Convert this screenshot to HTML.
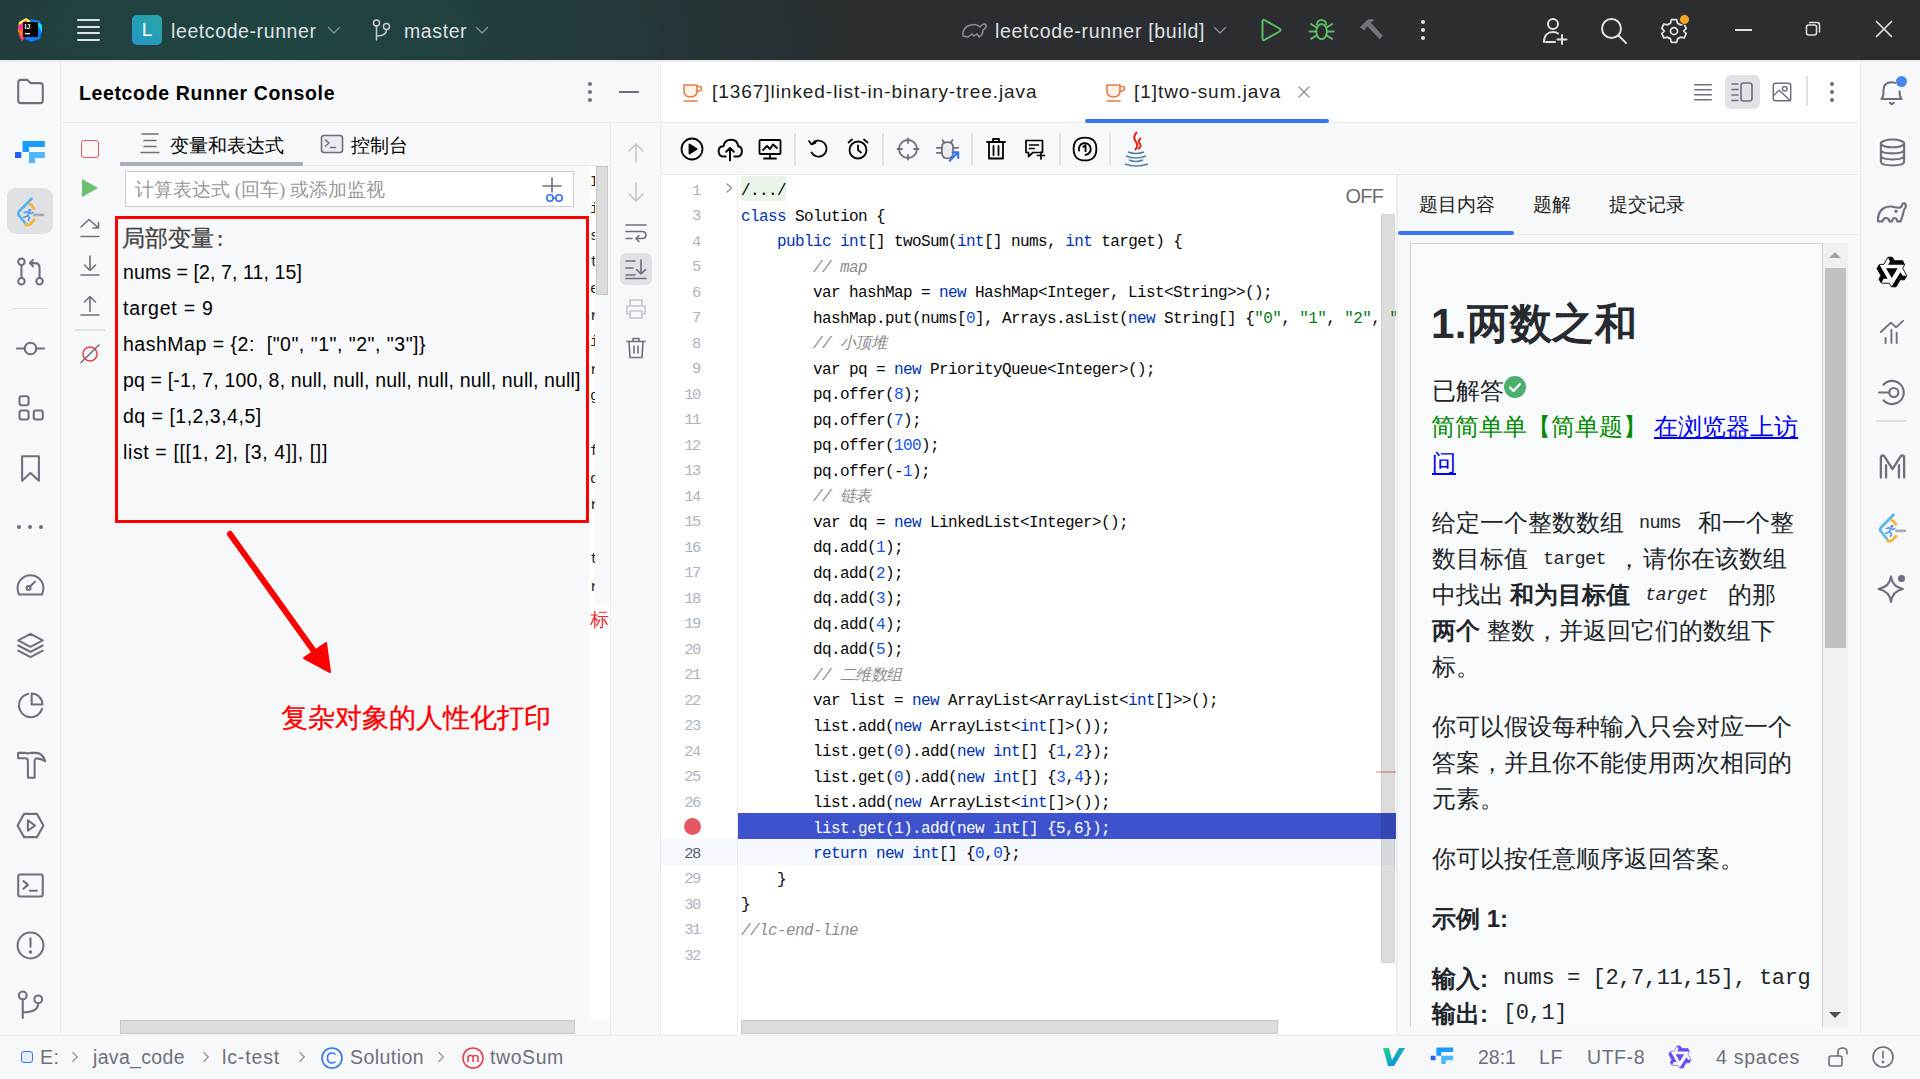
<!DOCTYPE html>
<html><head><meta charset="utf-8">
<style>
*{box-sizing:border-box;margin:0;padding:0}
html,body{width:1920px;height:1079px;overflow:hidden;background:#f7f8fa;font-family:"Liberation Sans",sans-serif;color:#000}
.a{position:absolute}
svg.i{position:absolute;fill:none;stroke:#6c707e;stroke-width:1.6;stroke-linecap:round;stroke-linejoin:round}
#title{left:0;top:0;width:1920px;height:60px;background:radial-gradient(ellipse 620px 260px at 260px 40px,#1f4542 0%,#213f3e 35%,#263436 70%,#2b2d30 100%)}
.tt{color:#dfe1e5;font-size:19.5px;white-space:nowrap;letter-spacing:0.6px}
.mono{font-family:"Liberation Mono",monospace}
.code{font-family:"Liberation Mono",monospace;font-size:16px;letter-spacing:-0.6px;padding-top:3.2px;white-space:pre;color:#080808;line-height:25.5px;height:25.5px}
.ln{font-family:"Liberation Mono",monospace;font-size:15.5px;padding-top:2.5px;margin-left:0px;letter-spacing:-1.4px;color:#aeb3c2;text-align:right;width:40px;line-height:25.5px}
.kw{color:#0033b3}
.num{color:#1750eb}
.str{color:#067d17}
.cm{color:#8c8c8c;font-style:italic}
.var{font-size:19.5px;color:#000;white-space:nowrap}
</style></head><body>
<!-- TITLE BAR -->
<div id="title" class="a"></div>
<!-- IJ logo -->
<svg class="a" style="left:17px;top:17px" width="26" height="26" viewBox="0 0 26 26">
<polygon points="2,5 9,1 14,4 8,12 1,15" fill="#fcf84a"/>
<polygon points="1,9 9,3 13,11 5,25 2,18" fill="#ff318c"/>
<polygon points="1,14 6,12 5,22" fill="#f97a12"/>
<polygon points="14,2 23,4 25,13 23,22 14,25 8,22 12,12" fill="#087cfa"/>
<polygon points="18,3 25,8 25,16" fill="#21d7f0"/>
<rect x="6" y="5" width="15" height="15" fill="#000"/>
<text x="7.5" y="11.8" font-family="Liberation Sans" font-weight="bold" font-size="7" fill="#fff">IJ</text>
<rect x="8" y="16" width="5" height="1.3" fill="#fff"/>
</svg>
<!-- hamburger -->
<div class="a" style="left:77px;top:19px;width:23px;height:2.2px;background:#dfe1e5;border-radius:1px"></div>
<div class="a" style="left:77px;top:25.5px;width:23px;height:2.2px;background:#dfe1e5;border-radius:1px"></div>
<div class="a" style="left:77px;top:32px;width:23px;height:2.2px;background:#dfe1e5;border-radius:1px"></div>
<div class="a" style="left:77px;top:38.5px;width:23px;height:2.2px;background:#dfe1e5;border-radius:1px"></div>
<!-- L badge -->
<div class="a" style="left:132px;top:15px;width:30px;height:30px;border-radius:5px;background:linear-gradient(35deg,#2794c8 0%,#27a7a4 100%)"></div>
<div class="a" style="left:132px;top:15px;width:30px;height:30px;color:#fff;font-size:19px;text-align:center;line-height:30px">L</div>
<div class="a tt" style="left:171px;top:20px">leetcode-runner</div>
<svg class="i" style="left:327px;top:25px;stroke:#8a8e99;stroke-width:1.3" width="14" height="10" viewBox="0 0 14 10"><path d="M1.5 2.5 L7 8 L12.5 2.5"/></svg>
<!-- branch -->
<svg class="i" style="left:371px;top:18px;stroke:#c9ccd6;stroke-width:1.5" width="22" height="24" viewBox="0 0 22 24"><circle cx="5.5" cy="5" r="3"/><circle cx="15.5" cy="8.5" r="3"/><path d="M5.5 8 V22 M5.5 18 Q15.5 18 15.5 11.5"/></svg>
<div class="a tt" style="left:404px;top:20px">master</div>
<svg class="i" style="left:475px;top:25px;stroke:#8a8e99;stroke-width:1.3" width="14" height="10" viewBox="0 0 14 10"><path d="M1.5 2.5 L7 8 L12.5 2.5"/></svg>
<!-- run config -->
<svg class="i" style="left:960px;top:19px;stroke:#8a8e99;stroke-width:1.5" width="28" height="22" viewBox="0 0 28 22"><path d="M3 17 C2 12 5 7 11 6 C15 5 18 6 20 8 C22 5 25 4 26 6 C27 9 24 10 23 11 C23 14 21 17 19 18 L17 15 L14 17 L12 15 L8 18 Z"/></svg>
<div class="a tt" style="left:995px;top:20px;letter-spacing:0.7px">leetcode-runner [build]</div>
<svg class="i" style="left:1213px;top:25px;stroke:#8a8e99;stroke-width:1.3" width="14" height="10" viewBox="0 0 14 10"><path d="M1.5 2.5 L7 8 L12.5 2.5"/></svg>
<!-- run -->
<svg class="a" style="left:1240px;top:0" width="160" height="60" viewBox="1240 0 160 60">
<path d="M1262.5 21.5 Q1262.5 19 1265 20.3 L1279.5 28.5 Q1281.5 30 1279.5 31.5 L1265 39.7 Q1262.5 41 1262.5 38.5 Z" fill="none" stroke="#5fb865" stroke-width="2" stroke-linejoin="round"/>
<g fill="none" stroke="#5fb865" stroke-width="2" stroke-linecap="round">
<path d="M1317 24.5 A4.6 4.6 0 0 1 1326.2 24.5"/>
<ellipse cx="1321.6" cy="31.6" rx="5.3" ry="7.6"/>
<path d="M1311 24 L1316.3 27.3 M1332.2 24 L1326.9 27.3 M1309.5 31.6 H1316.3 M1326.9 31.6 H1333.7 M1311 38.8 L1316.3 35.6 M1332.2 38.8 L1326.9 35.6"/>
</g>
<path d="M1359.8 27.2 L1366.5 20.5 Q1371 18 1374.3 20 L1370.8 22.8 L1383 35.8 L1379.8 39.3 L1367.2 26.2 L1364.3 30.6 Z" fill="#6f737a"/>
</svg>
<!-- kebab -->
<div class="a" style="left:1421px;top:20px;width:4px;height:4px;border-radius:50%;background:#dfe1e5"></div>
<div class="a" style="left:1421px;top:28px;width:4px;height:4px;border-radius:50%;background:#dfe1e5"></div>
<div class="a" style="left:1421px;top:36px;width:4px;height:4px;border-radius:50%;background:#dfe1e5"></div>
<!-- user plus -->
<svg class="i" style="left:1540px;top:16px;stroke:#dfe1e5;stroke-width:2" width="30" height="30" viewBox="0 0 30 30"><circle cx="13" cy="8" r="5"/><path d="M4 26 C4 19 8 16 13 16 C15 16 17 16.5 18 17.5 M6 26 H15 M22 19 V28 M17.5 23.5 H26.5"/></svg>
<!-- search -->
<svg class="i" style="left:1599px;top:16px;stroke:#dfe1e5;stroke-width:2" width="30" height="30" viewBox="0 0 30 30"><circle cx="12.5" cy="12.5" r="9.5"/><path d="M19.5 19.5 L27 27"/></svg>
<!-- gear -->
<svg class="i" style="left:1660px;top:17px;stroke:#dfe1e5;stroke-width:2" width="28" height="28" viewBox="0 0 32 32"><path d="M13 3 H19 L20 7 L23.5 9 L27.5 8 L30 13 L27 16 L30 19 L27.5 24 L23.5 23 L20 25 L19 29 H13 L12 25 L8.5 23 L4.5 24 L2 19 L5 16 L2 13 L4.5 8 L8.5 9 L12 7 Z"/><circle cx="16" cy="16" r="4"/></svg>
<div class="a" style="left:1679px;top:14px;width:11px;height:11px;border-radius:50%;background:#f4a52a;border:1.5px solid #2b2d30"></div>
<!-- window buttons -->
<div class="a" style="left:1735px;top:29px;width:17px;height:1.6px;background:#dfe1e5"></div>
<svg class="i" style="left:1803px;top:19px;stroke:#dfe1e5;stroke-width:1.5" width="20" height="20" viewBox="0 0 20 20"><rect x="3.5" y="6" width="10" height="10" rx="2"/><path d="M6.5 3.5 H14 Q16.5 3.5 16.5 6 V13"/></svg>
<svg class="i" style="left:1874px;top:19px;stroke:#dfe1e5;stroke-width:1.7" width="20" height="20" viewBox="0 0 20 20"><path d="M2.5 2.5 L17.5 17.5 M17.5 2.5 L2.5 17.5"/></svg>


<!-- frame borders -->
<div class="a" style="left:0;top:60px;width:1920px;height:2px;background:#ebecf0"></div>
<div class="a" style="left:60px;top:62px;width:1px;height:973px;background:#ebecf0"></div>
<div class="a" style="left:1860px;top:62px;width:1px;height:973px;background:#ebecf0"></div>

<!-- LEFT STRIP -->
<svg class="i" style="left:14.5px;top:75.5px;" width="31" height="31" viewBox="0 0 24 24"><path d="M2.5 5 Q2.5 3 4.5 3 H9.5 L12 5.5 H19.5 Q21.5 5.5 21.5 7.5 V19 Q21.5 21 19.5 21 H4.5 Q2.5 21 2.5 19 Z"/></svg>
<svg class="a" style="left:10px;top:131px" width="40.0" height="40.0" viewBox="0 0 40 40"><rect x="5" y="21" width="6.3" height="6" rx="0.6" fill="#1f62ff"/><path d="M12.5 10 H34.8 V16 H19 V21 H12.5 Z" fill="#1a9bff"/><path d="M19 21 H34.8 V27 H25 V32 H19 Z" fill="#4cb6ff"/></svg>
<div class="a" style="left:7px;top:188px;width:46px;height:46px;border-radius:9px;background:#dfe1e5"></div>
<svg class="a" style="left:10px;top:191px" width="40" height="40" viewBox="0 0 40 40"><path d="M21.5 7.8 L9 20.5 Q7.5 22.5 9 24.5 L15 32" fill="none" stroke="#5ab4ea" stroke-width="2.7" stroke-linecap="round" stroke-linejoin="round"/><path d="M19.8 13.5 Q20.5 13 21.2 13.7 L24 17.7" fill="none" stroke="#f5b431" stroke-width="2.7" stroke-linecap="round"/><path d="M15.5 33.5 Q18 35 20.5 33 L24 29" fill="none" stroke="#f5b431" stroke-width="2.7" stroke-linecap="round"/><path d="M24.2 23.8 H33" stroke="#ababab" stroke-width="2.8" stroke-linecap="round"/><circle cx="19.8" cy="19.2" r="1.5" fill="#4d94ef"/><path d="M14.2 21.6 L16.5 20.8 L19.2 21.8 L21.5 22.5 L22.8 21.4 M18.8 21.4 L17.5 25 L13.7 26.2 M17.6 25 L19.6 26.5 L18.5 29.5" fill="none" stroke="#4d94ef" stroke-width="1.5" stroke-linecap="round" stroke-linejoin="round"/></svg>

<svg class="i" style="left:14.5px;top:255.5px;" width="31" height="31" viewBox="0 0 24 24"><circle cx="5" cy="4.5" r="2.5"/><circle cx="5" cy="19.5" r="2.5"/><circle cx="19" cy="19.5" r="2.5"/><path d="M5 7 V17 M19 17 V9 Q19 5.5 15.5 5.5 H11.5 M14 3 L11.5 5.5 L14 8"/></svg>
<div class="a" style="left:12px;top:308px;width:36px;height:1px;background:#dfe1e5"></div>
<svg class="i" style="left:14.5px;top:332.5px;" width="31" height="31" viewBox="0 0 24 24"><circle cx="12" cy="12" r="4.5"/><path d="M1.5 12 H7.5 M16.5 12 H22.5"/></svg>
<svg class="i" style="left:14.5px;top:392.5px;" width="31" height="31" viewBox="0 0 24 24"><rect x="3.5" y="2.5" width="7" height="7" rx="1.5"/><rect x="3.5" y="13.5" width="7" height="7" rx="1.5"/><rect x="14.5" y="13.5" width="7" height="7" rx="1.5"/></svg>
<svg class="i" style="left:14.5px;top:452.5px;" width="31" height="31" viewBox="0 0 24 24"><path d="M5.5 2.5 H18.5 V21.5 L12 15.5 L5.5 21.5 Z"/></svg>
<div class="a" style="left:17px;top:525px;width:4px;height:4px;border-radius:50%;background:#6c707e"></div>
<div class="a" style="left:28px;top:525px;width:4px;height:4px;border-radius:50%;background:#6c707e"></div>
<div class="a" style="left:39px;top:525px;width:4px;height:4px;border-radius:50%;background:#6c707e"></div>
<svg class="i" style="left:14.5px;top:569.5px;" width="31" height="31" viewBox="0 0 24 24"><path d="M3 19 Q2 16 2 14 A10 10 0 0 1 22 14 Q22 16 21 19 Z"/><circle cx="10.5" cy="14" r="1.5"/><path d="M11.5 13 L15.5 9"/></svg>
<svg class="i" style="left:14.5px;top:629.5px;" width="31" height="31" viewBox="0 0 24 24"><path d="M12 3 L21.5 8 L12 13 L2.5 8 Z M2.5 12 L12 17 L21.5 12 M2.5 16 L12 21 L21.5 16"/></svg>
<svg class="i" style="left:14.5px;top:689.5px;" width="31" height="31" viewBox="0 0 24 24"><path d="M10.2 2.9 A9.2 9.2 0 1 0 21 14.6"/><path d="M12.9 2.7 V11.2 H21.2 A8.5 8.5 0 0 0 12.9 2.7 Z"/></svg>
<svg class="i" style="left:14.5px;top:749.5px;" width="31" height="31" viewBox="0 0 24 24"><path d="M2.4 2.2 H8 Q10 3 12 2.2 H16 Q21.5 2.2 23.3 8.6 Q19.5 6.2 16.3 6.5 Q15 6.8 15.2 9 V21.5 H10 V9 Q10.2 6.6 8 6.4 H2.4 Z"/></svg>
<svg class="i" style="left:14.5px;top:809.5px;" width="31" height="31" viewBox="0 0 24 24"><path d="M7 3 H17 L22 12 L17 21 H7 L2 12 Z"/><path d="M10 8 L15.5 12 L10 16 Z"/></svg>
<svg class="i" style="left:14.5px;top:869.5px;" width="31" height="31" viewBox="0 0 24 24"><rect x="2.5" y="3.5" width="19" height="17" rx="1.5"/><path d="M6.5 8.5 L10 11.5 L6.5 14.5 M11.5 16 H17"/></svg>
<svg class="i" style="left:14.5px;top:929.5px;" width="31" height="31" viewBox="0 0 24 24"><circle cx="12" cy="12" r="10"/><path d="M12 6.5 V13"/><circle cx="12" cy="17" r="0.6" fill="#6c707e"/></svg>
<svg class="i" style="left:14.5px;top:988.5px;" width="31" height="31" viewBox="0 0 24 24"><circle cx="6" cy="5" r="3"/><circle cx="18" cy="8" r="3"/><path d="M6 8 V22.5 M6 18 Q18 18 18 11"/></svg>
<!-- CONSOLE PANEL -->
<div class="a" style="left:61px;top:122px;width:599px;height:1px;background:#ebecf0"></div>
<div class="a" style="left:79px;top:81.5px;font-size:19.5px;font-weight:bold;color:#000;white-space:nowrap;letter-spacing:0.63px">Leetcode Runner Console</div>
<div class="a" style="left:588px;top:82px;width:4px;height:4px;border-radius:50%;background:#6c707e"></div>
<div class="a" style="left:588px;top:90px;width:4px;height:4px;border-radius:50%;background:#6c707e"></div>
<div class="a" style="left:588px;top:98px;width:4px;height:4px;border-radius:50%;background:#6c707e"></div>
<div class="a" style="left:619px;top:90.5px;width:20px;height:2px;background:#6c707e"></div>
<!-- mini toolbar -->
<div class="a" style="left:81px;top:140px;width:18px;height:18px;border:1.6px solid #e05a66;border-radius:3px;background:#fff6f6"></div>
<svg class="a" style="left:80px;top:178px" width="20" height="20" viewBox="0 0 20 20"><path d="M2 1 L18 10 L2 19 Z" fill="#6cbf6c"/></svg>
<svg class="i" style="left:78px;top:216px" width="24" height="24" viewBox="0 0 24 24"><path d="M3 11 L11 3.5 L20.5 12 M20.5 6.5 V12 H15 M3 20.5 H21"/></svg>
<svg class="i" style="left:78px;top:254px" width="24" height="24" viewBox="0 0 24 24"><path d="M12 2 V16.5 M6.5 11 L12 16.5 L17.5 11 M3 21 H21"/></svg>
<svg class="i" style="left:78px;top:293px" width="24" height="24" viewBox="0 0 24 24"><path d="M12 18.5 V3.5 M6.5 9 L12 3.5 L17.5 9 M3 22 H21"/></svg>
<div class="a" style="left:75px;top:329px;width:30px;height:1.5px;background:#dfe1e5"></div>
<svg class="i" style="left:78px;top:342px" width="24" height="24" viewBox="0 0 24 24"><circle cx="12" cy="12" r="7" stroke="#e5424f"/><path d="M3 20.5 L21 3" stroke="#6c707e"/></svg>
<!-- tabs -->
<svg class="i" style="left:139px;top:131px" width="22" height="24" viewBox="0 0 22 24"><path d="M3 3 H19 M5 9.5 H17 M5 15.5 H17 M2 21.5 H20"/></svg>
<div class="a" style="left:170px;top:133px;font-size:19px;color:#000;white-space:nowrap">变量和表达式</div>
<div class="a" style="left:120px;top:162px;width:183px;height:4px;background:#a8adbd;border-radius:1px"></div>
<div class="a" style="left:303px;top:165px;width:307px;height:1px;background:#ebecf0"></div>
<svg class="i" style="left:320px;top:134px" width="24" height="20" viewBox="0 0 24 20"><rect x="1.5" y="1.5" width="21" height="17" rx="2.5" fill="#ebecf0"/><path d="M5.5 6 L9 9 L5.5 12 M10.5 13.5 H15.5"/></svg>
<div class="a" style="left:351px;top:133px;font-size:19px;color:#000;white-space:nowrap">控制台</div>
<!-- input -->
<div class="a" style="left:125px;top:171px;width:449px;height:36px;border:1.5px solid #c9ccd6;background:#fff"></div>
<div class="a" style="left:135px;top:177px;font-size:19px;color:#9a9a9a;white-space:nowrap;font-family:'Liberation Serif',serif">计算表达式 (回车) 或添加监视</div>
<svg class="i" style="left:540px;top:176px;stroke-width:1.6" width="26" height="28" viewBox="0 0 26 28"><path d="M12 2 V16 M3 10 H21" stroke="#6c707e"/><circle cx="10" cy="22" r="3.2" stroke="#3d74e8"/><circle cx="19" cy="22" r="3.2" stroke="#3d74e8"/><path d="M13 22 H16" stroke="#3d74e8"/></svg>
<!-- console strip + scrollbar -->
<div class="a" style="left:589px;top:166px;width:6px;height:854px;background:#fff;overflow:hidden"><div class="a mono" style="left:1px;top:7px;font-size:15px;color:#222;line-height:20px">I</div><div class="a mono" style="left:1px;top:34px;font-size:15px;color:#222;line-height:20px">i</div><div class="a mono" style="left:1px;top:61px;font-size:15px;color:#222;line-height:20px">s</div><div class="a mono" style="left:1px;top:87px;font-size:15px;color:#222;line-height:20px">t</div><div class="a mono" style="left:1px;top:114px;font-size:15px;color:#222;line-height:20px">e</div><div class="a mono" style="left:1px;top:141px;font-size:15px;color:#222;line-height:20px">r</div><div class="a mono" style="left:1px;top:167px;font-size:15px;color:#222;line-height:20px">i</div><div class="a mono" style="left:1px;top:195px;font-size:15px;color:#222;line-height:20px">r</div><div class="a mono" style="left:1px;top:221px;font-size:15px;color:#222;line-height:20px">g</div><div class="a mono" style="left:1px;top:276px;font-size:15px;color:#222;line-height:20px">f</div><div class="a mono" style="left:1px;top:304px;font-size:15px;color:#222;line-height:20px">c</div><div class="a mono" style="left:1px;top:330px;font-size:15px;color:#222;line-height:20px">r</div><div class="a mono" style="left:1px;top:384px;font-size:15px;color:#222;line-height:20px">t</div><div class="a mono" style="left:1px;top:412px;font-size:15px;color:#222;line-height:20px">r</div></div>
<div class="a" style="left:589px;top:605px;width:21px;height:415px;background:#fff"></div>
<div class="a" style="left:590px;top:607px;font-size:19px;color:#f03030;line-height:26px">标</div>

<div class="a" style="left:596px;top:166px;width:12px;height:129px;background:#dcdcdc;border:1px solid #c8c8c8"></div>
<div class="a" style="left:610px;top:123px;width:1px;height:912px;background:#ebecf0"></div>
<!-- right toolbar -->
<svg class="i" style="left:624px;top:141px;stroke:#c3c6cf" width="24" height="24" viewBox="0 0 24 24"><path d="M12 21 V3 M5 10 L12 3 L19 10"/></svg>
<svg class="i" style="left:624px;top:180px;stroke:#c3c6cf" width="24" height="24" viewBox="0 0 24 24"><path d="M12 3 V21 M5 14 L12 21 L19 14"/></svg>
<svg class="i" style="left:624px;top:220px" width="24" height="24" viewBox="0 0 24 24"><path d="M2 5 H22 M2 11.5 H18 Q22 11.5 22 15 Q22 18.5 18 18.5 H12 M15 15.5 L12 18.5 L15 21.5 M2 18.5 H8"/></svg>
<div class="a" style="left:620px;top:253px;width:32px;height:32px;border-radius:6px;background:#dfe1e5"></div>
<svg class="i" style="left:624px;top:257px" width="24" height="24" viewBox="0 0 24 24"><path d="M2 4 H11 M2 11 H9 M2 18 H11 M2 21.5 H22 M17 3 V17 M12.5 12.5 L17 17 L21.5 12.5"/></svg>
<svg class="i" style="left:624px;top:297px;stroke:#c3c6cf" width="24" height="24" viewBox="0 0 24 24"><path d="M6 9 V3 H18 V9 M6 17 H3 V9 H21 V17 H18 M6 14 H18 V21 H6 Z"/></svg>
<svg class="i" style="left:624px;top:336px" width="24" height="24" viewBox="0 0 24 24"><path d="M3 5.5 H21 M9 5.5 V2.5 H15 V5.5 M5 5.5 L6 21.5 H18 L19 5.5 M10 10 V17 M14 10 V17"/></svg>
<!-- red box -->
<div class="a" style="left:115px;top:216px;width:474px;height:307px;border:3px solid #ff0000"></div>
<div class="a var" style="left:122px;top:223px;font-size:22.5px;color:#444;font-family:'Liberation Serif',serif;-webkit-text-stroke:0.3px #444">局部变量<span style="margin-left:3px">:</span></div>
<div class="a var" style="left:123px;top:261px;letter-spacing:0.1px">nums = [2, 7, 11, 15]</div>
<div class="a var" style="left:123px;top:297px;letter-spacing:0.78px">target = 9</div>
<div class="a var" style="left:123px;top:333px;letter-spacing:0.51px">hashMap = {2:&nbsp; ["0", "1", "2", "3"]}</div>
<div class="a var" style="left:123px;top:369px;letter-spacing:0.17px">pq = [-1, 7, 100, 8, null, null, null, null, null, null, null]</div>
<div class="a var" style="left:123px;top:405px;letter-spacing:0.5px">dq = [1,2,3,4,5]</div>
<div class="a var" style="left:123px;top:441px;letter-spacing:0.62px">list = [[[1, 2], [3, 4]], []]</div>
<!-- arrow -->
<svg class="a" style="left:0;top:0" width="660" height="760"><path d="M230 534 L316 654" stroke="#ff0000" stroke-width="6" stroke-linecap="round"/><path d="M304 658 L330 672 L326 643 Z" fill="#ff0000" stroke="#ff0000" stroke-width="2" stroke-linejoin="round"/></svg>
<div class="a" style="left:281px;top:700px;font-size:27px;color:#ff0000;white-space:nowrap;-webkit-text-stroke:0.3px #ff0000">复杂对象的人性化打印</div>
<!-- h scrollbar -->
<div class="a" style="left:120px;top:1020px;width:455px;height:14px;background:#dcdcdc;border:1px solid #c8c8c8"></div>


<!-- EDITOR -->
<div class="a" style="left:660px;top:62px;width:1px;height:973px;background:#ebecf0"></div>
<div class="a" style="left:661px;top:62px;width:1199px;height:61px;background:#fff"></div>
<div class="a" style="left:661px;top:122px;width:1199px;height:1px;background:#ebecf0"></div>
<div class="a" style="left:661px;top:174px;width:1199px;height:1px;background:#ebecf0"></div>
<div class="a" style="left:661px;top:175px;width:735px;height:860px;background:#fff"></div>
<div class="a" style="left:737px;top:175px;width:1px;height:860px;background:#ebecf0"></div>

<svg class="i" style="left:681.0px;top:80.0px;stroke-width:1.6" width="24" height="24" viewBox="0 0 24 24"><path d="M3 5 H16 V11 Q16 17 9.5 17 Q3 17 3 11 Z" fill="#fdf1e8" stroke="#e07e45"/><path d="M16 6.5 H18.5 Q20.5 6.5 20.5 8.5 Q20.5 11 16 11.5" stroke="#e07e45"/><path d="M3 21 H16" stroke="#e07e45"/></svg>
<div class="a tt" style="left:712px;top:81px;color:#222;font-size:19px;letter-spacing:0.95px">[1367]linked-list-in-binary-tree.java</div>
<svg class="i" style="left:1104.0px;top:80.0px;stroke-width:1.6" width="24" height="24" viewBox="0 0 24 24"><path d="M3 5 H16 V11 Q16 17 9.5 17 Q3 17 3 11 Z" fill="#fdf1e8" stroke="#e07e45"/><path d="M16 6.5 H18.5 Q20.5 6.5 20.5 8.5 Q20.5 11 16 11.5" stroke="#e07e45"/><path d="M3 21 H16" stroke="#e07e45"/></svg>
<div class="a tt" style="left:1134px;top:81px;color:#222;font-size:19px;letter-spacing:0.95px">[1]two-sum.java</div>
<svg class="i" style="left:1294.0px;top:82.0px;stroke:#8a8e99;stroke-width:1.5" width="20" height="20" viewBox="0 0 24 24"><path d="M6 6 L18 18 M18 6 L6 18"/></svg>
<div class="a" style="left:1085px;top:119px;width:244px;height:4px;border-radius:2px;background:#3574f0"></div>
<svg class="i" style="left:1692.0px;top:81.0px;" width="22" height="22" viewBox="0 0 24 24"><path d="M3 4 H21 M3 9.5 H21 M3 15 H21 M3 20.5 H21"/></svg>
<div class="a" style="left:1725px;top:75px;width:35px;height:34px;border-radius:6px;background:#dfe1e5"></div>
<svg class="i" style="left:1730.0px;top:80.0px;" width="24" height="24" viewBox="0 0 24 24"><path d="M2 4 H8 M2 9.5 H8 M2 15 H8 M2 20.5 H8"/><rect x="11" y="3" width="11" height="18" rx="2.5"/></svg>
<svg class="i" style="left:1771.0px;top:81.0px;" width="22" height="22" viewBox="0 0 24 24"><rect x="2.5" y="2.5" width="19" height="19" rx="2.5"/><circle cx="15" cy="8.5" r="2.5"/><path d="M2.5 16 L9 10 L21 21.5"/></svg>
<div class="a" style="left:1806px;top:76px;width:1.5px;height:30px;background:#dfe1e5"></div>
<div class="a" style="left:1830px;top:82px;width:4px;height:4px;border-radius:50%;background:#6c707e"></div>
<div class="a" style="left:1830px;top:90px;width:4px;height:4px;border-radius:50%;background:#6c707e"></div>
<div class="a" style="left:1830px;top:98px;width:4px;height:4px;border-radius:50%;background:#6c707e"></div>
<svg class="i" style="left:680.0px;top:137.0px;stroke:#000;stroke-width:1.8" width="24" height="24" viewBox="0 0 24 24"><circle cx="12" cy="12" r="10.5"/><path d="M9.5 7.5 L16.5 12 L9.5 16.5 Z" fill="#000"/></svg>
<svg class="i" style="left:717.0px;top:136.0px;stroke:#000;stroke-width:1.8" width="26" height="26" viewBox="0 0 24 24"><path d="M8 19 H6.5 Q1.5 19 1.5 14 Q1.5 9.5 6 9.5 Q7 3.5 13 3.5 Q19 3.5 19.5 9.5 Q23 10 23 14 Q23 19 18 19 H16 M12 22.5 V11 M8.5 14.5 L12 11 L15.5 14.5"/></svg>
<svg class="i" style="left:758.0px;top:137.0px;stroke:#000;stroke-width:1.8" width="24" height="24" viewBox="0 0 24 24"><rect x="1.5" y="3" width="21" height="14" rx="1"/><path d="M5 13 L9 9 L12 12 L15 7.5 L19 11 M12 17 V21 M6 21.5 H18"/></svg>
<div class="a" style="left:794.25px;top:133px;width:1.5px;height:32px;background:#dfe1e5"></div>
<div class="a" style="left:882.25px;top:133px;width:1.5px;height:32px;background:#dfe1e5"></div>
<div class="a" style="left:971.25px;top:133px;width:1.5px;height:32px;background:#dfe1e5"></div>
<div class="a" style="left:1059.25px;top:133px;width:1.5px;height:32px;background:#dfe1e5"></div>
<div class="a" style="left:1109.25px;top:133px;width:1.5px;height:32px;background:#dfe1e5"></div>
<svg class="i" style="left:806.0px;top:137.0px;stroke:#000;stroke-width:1.7" width="24" height="24" viewBox="0 0 24 24"><path d="M5.5 15.5 A8 8 0 1 0 6 7 M3 4 L5.5 7.5 L9.5 6"/></svg>
<svg class="i" style="left:846.0px;top:137.0px;stroke:#000;stroke-width:1.8" width="24" height="24" viewBox="0 0 24 24"><circle cx="12" cy="13" r="8.5"/><path d="M12 8.5 V13 L15 15.5 M2.5 5.5 L6 2.5 M21.5 5.5 L18 2.5"/></svg>
<svg class="i" style="left:896.0px;top:137.0px;stroke:#6c707e;stroke-width:1.8" width="24" height="24" viewBox="0 0 24 24"><circle cx="12" cy="12" r="9"/><path d="M12 1.5 V6 M12 18 V22.5 M1.5 12 H6 M18 12 H22.5"/></svg>
<svg class="i" style="left:933.5px;top:135.5px;stroke-width:1.5" width="27" height="27" viewBox="0 0 24 24"><path d="M7 10 Q7 5.5 12 5.5 Q17 5.5 17 10 V14.5 Q17 20 12 20 Q7 20 7 14.5 Z" fill="#ebecf0" stroke="#6c707e"/><path d="M9 6 L7.5 3.5 M15 6 L16.5 3.5 M7 10.5 H2.5 M7 15 H2.5 M17 10.5 H21.5" stroke="#6c707e"/><path d="M14 22 L21.5 14.5 M16.5 14.5 H21.5 V19.5" stroke="#3574f0" stroke-width="1.9"/></svg>
<svg class="i" style="left:984.0px;top:137.0px;stroke:#000;stroke-width:1.8" width="24" height="24" viewBox="0 0 24 24"><path d="M3 5 H21 M9 5 V2 H15 V5 M5 5 V21.5 H19 V5 M9.5 9 V18 M14.5 9 V18"/></svg>
<svg class="i" style="left:1023.0px;top:137.0px;stroke:#000;stroke-width:1.7" width="24" height="24" viewBox="0 0 24 24"><path d="M3 3.5 H19.5 V15.5 H10 L5.5 19.5 V15.5 H3 Z M6.5 8 H15.5 M6.5 11.5 H11 M18 15 V22 M14.5 18.5 H21.5"/></svg>
<svg class="i" style="left:1072.0px;top:136.0px;stroke:#000;stroke-width:1.7" width="26" height="26" viewBox="0 0 24 24"><path d="M12 1.5 Q22.5 1.5 22.5 12 Q22.5 22.5 12 22.5 Q1.5 22.5 1.5 12 Q1.5 1.5 12 1.5 Z"/><path d="M6.5 13.5 A5.5 5.5 0 1 1 12.5 17.5 M12.5 8.5 V14 M10.5 10 L12.5 8.5"/></svg>
<svg class="a" style="left:1122px;top:130px" width="28" height="38" viewBox="0 0 28 38"><path d="M15 2 Q10 7 14 12 Q17 16 13 20 M19 8 Q15 11 18 14 Q20 17 16 19" fill="none" stroke="#e2231a" stroke-width="2"/><path d="M6 22 Q14 25 22 22 M4 26 Q14 30 24 26 M7 30 Q14 33 21 30 M3 34 Q14 38 26 34" fill="none" stroke="#5382a1" stroke-width="1.6"/></svg>
<div class="a" style="left:1345.5px;top:184.5px;font-size:20px;color:#6e6e6e;letter-spacing:-0.7px">OFF</div>
<div class="a" style="left:1376px;top:771px;width:20px;height:2px;background:#f2b8bd"></div>
<div class="a" style="left:741px;top:1020px;width:537px;height:14px;background:#dcdcdc;border:1px solid #c8c8c8"></div>
<svg class="i" style="left:722.5px;top:181px;stroke:#8a8e99;stroke-width:1.3" width="12" height="14" viewBox="0 0 12 14"><path d="M4 3 L8.5 7 L4 11"/></svg>
<div class="a" style="left:741px;top:176px;width:45px;height:25px;background:#e9f3e7"></div>
<!-- CODE -->
<div class="a" style="left:661px;top:175px;width:735px;height:860px;overflow:hidden">
<div class="a" style="left:-661px;top:-175px;width:1920px;height:1079px">
<div class="a ln" style="left:660px;top:176.0px;">1</div>
<div class="a code" style="left:741px;top:176.0px">/.../</div>
<div class="a ln" style="left:660px;top:201.5px;">3</div>
<div class="a code" style="left:741px;top:201.5px"><span class="kw">class</span> Solution {</div>
<div class="a ln" style="left:660px;top:227.0px;">4</div>
<div class="a code" style="left:741px;top:227.0px">    <span class="kw">public</span> <span class="kw">int</span>[] twoSum(<span class="kw">int</span>[] nums, <span class="kw">int</span> target) {</div>
<div class="a ln" style="left:660px;top:252.5px;">5</div>
<div class="a code" style="left:741px;top:252.5px">        <span class="cm">// map</span></div>
<div class="a ln" style="left:660px;top:278.0px;">6</div>
<div class="a code" style="left:741px;top:278.0px">        var hashMap = <span class="kw">new</span> HashMap&lt;Integer, List&lt;String&gt;&gt;();</div>
<div class="a ln" style="left:660px;top:303.5px;">7</div>
<div class="a code" style="left:741px;top:303.5px">        hashMap.put(nums[<span class="num">0</span>], Arrays.asList(<span class="kw">new</span> String[] {<span class="str">"0"</span>, <span class="str">"1"</span>, <span class="str">"2"</span>, <span class="str">"3"</span>}));</div>
<div class="a ln" style="left:660px;top:329.0px;">8</div>
<div class="a code" style="left:741px;top:329.0px">        <span class="cm">// <span class="cjk">小顶堆</span></span></div>
<div class="a ln" style="left:660px;top:354.5px;">9</div>
<div class="a code" style="left:741px;top:354.5px">        var pq = <span class="kw">new</span> PriorityQueue&lt;Integer&gt;();</div>
<div class="a ln" style="left:660px;top:380.0px;">10</div>
<div class="a code" style="left:741px;top:380.0px">        pq.offer(<span class="num">8</span>);</div>
<div class="a ln" style="left:660px;top:405.5px;">11</div>
<div class="a code" style="left:741px;top:405.5px">        pq.offer(<span class="num">7</span>);</div>
<div class="a ln" style="left:660px;top:431.0px;">12</div>
<div class="a code" style="left:741px;top:431.0px">        pq.offer(<span class="num">100</span>);</div>
<div class="a ln" style="left:660px;top:456.5px;">13</div>
<div class="a code" style="left:741px;top:456.5px">        pq.offer(-<span class="num">1</span>);</div>
<div class="a ln" style="left:660px;top:482.0px;">14</div>
<div class="a code" style="left:741px;top:482.0px">        <span class="cm">// <span class="cjk">链表</span></span></div>
<div class="a ln" style="left:660px;top:507.5px;">15</div>
<div class="a code" style="left:741px;top:507.5px">        var dq = <span class="kw">new</span> LinkedList&lt;Integer&gt;();</div>
<div class="a ln" style="left:660px;top:533.0px;">16</div>
<div class="a code" style="left:741px;top:533.0px">        dq.add(<span class="num">1</span>);</div>
<div class="a ln" style="left:660px;top:558.5px;">17</div>
<div class="a code" style="left:741px;top:558.5px">        dq.add(<span class="num">2</span>);</div>
<div class="a ln" style="left:660px;top:584.0px;">18</div>
<div class="a code" style="left:741px;top:584.0px">        dq.add(<span class="num">3</span>);</div>
<div class="a ln" style="left:660px;top:609.5px;">19</div>
<div class="a code" style="left:741px;top:609.5px">        dq.add(<span class="num">4</span>);</div>
<div class="a ln" style="left:660px;top:635.0px;">20</div>
<div class="a code" style="left:741px;top:635.0px">        dq.add(<span class="num">5</span>);</div>
<div class="a ln" style="left:660px;top:660.5px;">21</div>
<div class="a code" style="left:741px;top:660.5px">        <span class="cm">// <span class="cjk">二维数组</span></span></div>
<div class="a ln" style="left:660px;top:686.0px;">22</div>
<div class="a code" style="left:741px;top:686.0px">        var list = <span class="kw">new</span> ArrayList&lt;ArrayList&lt;<span class="kw">int</span>[]&gt;&gt;();</div>
<div class="a ln" style="left:660px;top:711.5px;">23</div>
<div class="a code" style="left:741px;top:711.5px">        list.add(<span class="kw">new</span> ArrayList&lt;<span class="kw">int</span>[]&gt;());</div>
<div class="a ln" style="left:660px;top:737.0px;">24</div>
<div class="a code" style="left:741px;top:737.0px">        list.get(<span class="num">0</span>).add(<span class="kw">new</span> <span class="kw">int</span>[] {<span class="num">1</span>,<span class="num">2</span>});</div>
<div class="a ln" style="left:660px;top:762.5px;">25</div>
<div class="a code" style="left:741px;top:762.5px">        list.get(<span class="num">0</span>).add(<span class="kw">new</span> <span class="kw">int</span>[] {<span class="num">3</span>,<span class="num">4</span>});</div>
<div class="a ln" style="left:660px;top:788.0px;">26</div>
<div class="a code" style="left:741px;top:788.0px">        list.add(<span class="kw">new</span> ArrayList&lt;<span class="kw">int</span>[]&gt;());</div>
<div class="a" style="left:738px;top:813.0px;width:658px;height:25.5px;background:#3d52cc"></div>
<div class="a code" style="left:741px;top:813.5px;color:#fff">        list.get(1).add(new int[] {5,6});</div>
<div class="a" style="left:684px;top:818.0px;width:17px;height:17px;border-radius:50%;background:#e55765"></div>
<div class="a" style="left:661px;top:839.0px;width:735px;height:25.5px;background:#f5f8fe"></div>
<div class="a" style="left:737px;top:839.0px;width:1px;height:25.5px;background:#ebecf0"></div>
<div class="a ln" style="left:660px;top:839.0px;color:#5e6270">28</div>
<div class="a code" style="left:741px;top:839.0px">        <span class="kw">return</span> <span class="kw">new</span> <span class="kw">int</span>[] {<span class="num">0</span>,<span class="num">0</span>};</div>
<div class="a ln" style="left:660px;top:864.5px;">29</div>
<div class="a code" style="left:741px;top:864.5px">    }</div>
<div class="a ln" style="left:660px;top:890.0px;">30</div>
<div class="a code" style="left:741px;top:890.0px">}</div>
<div class="a ln" style="left:660px;top:915.5px;">31</div>
<div class="a code" style="left:741px;top:915.5px"><span class="cm">//lc-end-line</span></div>
<div class="a ln" style="left:660px;top:941.0px;">32</div>
<div class="a code" style="left:741px;top:941.0px"></div>
</div></div>
<div class="a" style="left:1396px;top:175px;width:1.5px;height:860px;background:#ebecf0"></div>
<div class="a" style="left:1419px;top:192px;font-size:19px;color:#222;white-space:nowrap">题目内容</div>
<div class="a" style="left:1533px;top:192px;font-size:19px;color:#222;white-space:nowrap">题解</div>
<div class="a" style="left:1609px;top:192px;font-size:19px;color:#222;white-space:nowrap">提交记录</div>
<div class="a" style="left:1513px;top:234px;width:347px;height:1px;background:#ebecf0"></div>
<div class="a" style="left:1398px;top:231px;width:116px;height:4px;border-radius:2px;background:#3574f0"></div>
<div class="a" style="left:1410px;top:243px;width:413px;height:792px;border:1px solid #cfd2d8;border-bottom:none;background:#f9fafb"></div>
<div class="a" style="left:1823px;top:243px;width:25px;height:792px;background:#f0f0f0"></div>
<svg class="a" style="left:1828px;top:250px" width="14" height="10"><path d="M1 8 L7 2 L13 8 Z" fill="#a3a3a3"/></svg>
<svg class="a" style="left:1828px;top:1010px" width="14" height="10"><path d="M1 2 L7 8 L13 2 Z" fill="#505050"/></svg>
<div class="a" style="left:1825px;top:268px;width:21px;height:380px;background:#c1c1c1"></div>
<div class="a" style="left:1431px;top:295.5px;font-size:42px;font-weight:bold;color:#262a2f;white-space:nowrap;letter-spacing:0.5px">1.两数之和</div>
<div class="a" style="left:1432px;top:375px;color:#212529;white-space:nowrap;font-size:24px">已解答</div>
<svg class="a" style="left:1504px;top:376px" width="22" height="22" viewBox="0 0 22 22"><circle cx="11" cy="11" r="11" fill="#4caf6e"/><path d="M6 11.5 L9.5 15 L16 8" fill="none" stroke="#fff" stroke-width="2.2" stroke-linecap="round" stroke-linejoin="round"/></svg>
<div class="a" style="left:1431px;top:411px;color:#212529;white-space:nowrap;font-size:24px;color:#008a00">简简单单【简单题】</div>
<div class="a" style="left:1654px;top:411px;color:#212529;white-space:nowrap;font-size:24px;color:#0000ee;text-decoration:underline">在浏览器上访</div>
<div class="a" style="left:1432px;top:447px;color:#212529;white-space:nowrap;font-size:24px;color:#0000ee;text-decoration:underline">问</div>
<div class="a" style="left:1432px;top:507px;color:#212529;white-space:nowrap;font-size:24px">给定一个整数数组</div>
<div class="a" style="left:1639px;top:513px;color:#212529;white-space:nowrap;font-size:24px;font-family:'Liberation Mono',monospace;font-size:18.5px;letter-spacing:-0.6px">nums</div>
<div class="a" style="left:1698px;top:507px;color:#212529;white-space:nowrap;font-size:24px">和一个整</div>
<div class="a" style="left:1432px;top:543px;color:#212529;white-space:nowrap;font-size:24px">数目标值</div>
<div class="a" style="left:1543px;top:549px;color:#212529;white-space:nowrap;font-size:24px;font-family:'Liberation Mono',monospace;font-size:18.5px;letter-spacing:-0.6px">target</div>
<div class="a" style="left:1617px;top:543px;color:#212529;white-space:nowrap;font-size:24px">，</div>
<div class="a" style="left:1643px;top:543px;color:#212529;white-space:nowrap;font-size:24px">请你在该数组</div>
<div class="a" style="left:1432px;top:579px;color:#212529;white-space:nowrap;font-size:24px">中找出</div>
<div class="a" style="left:1510px;top:579px;color:#212529;white-space:nowrap;font-size:24px;font-weight:bold">和为目标值</div>
<div class="a" style="left:1645px;top:585px;color:#212529;white-space:nowrap;font-size:24px;font-family:'Liberation Mono',monospace;font-size:18.5px;letter-spacing:-0.6px;font-style:italic">target</div>
<div class="a" style="left:1728px;top:579px;color:#212529;white-space:nowrap;font-size:24px">的那</div>
<div class="a" style="left:1432px;top:615px;color:#212529;white-space:nowrap;font-size:24px;font-weight:bold">两个</div>
<div class="a" style="left:1487px;top:615px;color:#212529;white-space:nowrap;font-size:24px">整数，并返回它们的数组下</div>
<div class="a" style="left:1432px;top:651px;color:#212529;white-space:nowrap;font-size:24px">标。</div>
<div class="a" style="left:1432px;top:711px;color:#212529;white-space:nowrap;font-size:24px">你可以假设每种输入只会对应一个</div>
<div class="a" style="left:1432px;top:747px;color:#212529;white-space:nowrap;font-size:24px">答案，并且你不能使用两次相同的</div>
<div class="a" style="left:1432px;top:783px;color:#212529;white-space:nowrap;font-size:24px">元素。</div>
<div class="a" style="left:1432px;top:843px;color:#212529;white-space:nowrap;font-size:24px">你可以按任意顺序返回答案。</div>
<div class="a" style="left:1432px;top:903px;color:#212529;white-space:nowrap;font-size:24px;font-weight:bold">示例 1:</div>
<div class="a" style="left:1432px;top:963px;color:#212529;white-space:nowrap;font-size:24px;font-weight:bold">输入:</div>
<div class="a" style="left:1503px;top:966px;color:#212529;white-space:nowrap;font-size:24px;font-family:'Liberation Mono',monospace;font-size:22px;letter-spacing:-0.4px">nums = [2,7,11,15], targ</div>
<div class="a" style="left:1432px;top:998px;color:#212529;white-space:nowrap;font-size:24px;font-weight:bold">输出:</div>
<div class="a" style="left:1503px;top:1001px;color:#212529;white-space:nowrap;font-size:24px;font-family:'Liberation Mono',monospace;font-size:22px;letter-spacing:-0.4px">[0,1]</div>
<div class="a" style="left:1822px;top:243px;width:1px;height:792px;background:#cfd2d8"></div>
<div class="a" style="left:1405px;top:1027px;width:450px;height:8px;background:#f7f8fa"></div>
<svg class="i" style="left:1876.5px;top:76.5px;" width="31" height="31" viewBox="0 0 24 24"><path d="M3.5 17 Q5 15.5 5 12 V10 Q5 4 11.5 4 Q13 4 14 4.5 M3.5 17 H19 Q17.5 15.5 17.5 12 V11 M10 20 L11.5 21 L13 20"/></svg>
<div class="a" style="left:1896px;top:76px;width:11px;height:11px;border-radius:50%;background:#4a86f0"></div>
<svg class="i" style="left:1876.5px;top:136.5px;" width="31" height="31" viewBox="0 0 24 24"><ellipse cx="12" cy="5" rx="9" ry="3"/><path d="M3 5 V19 Q3 22 12 22 Q21 22 21 19 V5 M3 9.7 Q3 12.7 12 12.7 Q21 12.7 21 9.7 M3 14.4 Q3 17.4 12 17.4 Q21 17.4 21 14.4"/></svg>
<svg class="i" style="left:1876.0px;top:196.0px;" width="32" height="32" viewBox="0 0 24 24"><path d="M1.5 19 Q1 12 6 9 Q10 7 14.5 8.5 Q18 9.5 19.5 7.5 Q19.5 5 21.5 5.5 Q23.5 7 21 10.5 Q20 15 18.5 19 H16 Q15.5 16.5 14 16.5 Q12.5 16.5 12 19 H10 Q9.5 16.5 7.5 16.5 Q5.5 16.5 5 19 Z"/><circle cx="15" cy="11.5" r="0.5" fill="#6c707e"/></svg>
<svg class="a" style="left:1872px;top:252px" width="40.0" height="40.0" viewBox="0 0 40 40"><g fill="#000"><polygon points="15.9,5.2 20.2,5.2 22.4,8.7 30.6,8.7 32.6,12.8 16.1,12.8 18,9.4"/><polygon points="5,16.5 7.4,12.4 15.6,26.7 11.5,26.7 9.4,31.1 7,27.2 8.9,23.5"/><polygon points="14.1,16.3 25.6,16.3 19.8,25.9"/><polygon points="28.5,20.2 30.7,23.7 34.8,23.7 32.4,27.8 28.1,27.8 24.1,34.8 19.4,34.8"/></g><g fill="none" stroke="#000" stroke-width="0.9" stroke-linejoin="round"><polygon points="15.9,5.2 20.2,5.2 22.4,8.7 30.6,8.7 32.6,12.8 30.7,16.3 34.8,23.7 32.4,27.8 28.1,27.8 24.1,34.8 19.4,34.8 17.4,31.3 9.4,31.1 7,27.2 8.9,23.5 5,16.5 7.4,12.4 11.8,12.4"/></g></svg>

<svg class="i" style="left:1878.0px;top:318.0px;" width="28" height="28" viewBox="0 0 24 24"><path d="M2.5 12 L11 4 L15.5 8 L21.5 2.5 M6.5 21.5 V17 M11.5 21.5 V10 M16 21.5 V12.5"/></svg>
<svg class="i" style="left:1876.5px;top:376.5px;" width="31" height="31" viewBox="0 0 24 24"><path d="M5 6 A9 9 0 1 1 5 18"/><circle cx="13" cy="12" r="3.5"/><path d="M1.5 12 H9.5"/></svg>
<div class="a" style="left:1876px;top:420px;width:31px;height:1.5px;background:#dfe1e5"></div>
<svg class="i" style="left:1876.5px;top:450.5px;stroke-width:1.8" width="31" height="31" viewBox="0 0 24 24"><path d="M3 20.5 V5 Q3 3.5 4.5 3.5 Q5.5 3.5 6 4.5 L12 14 L18 4.5 Q18.5 3.5 19.5 3.5 Q21 3.5 21 5 V20.5 M7 20.5 V11 M17 20.5 V11"/></svg>
<svg class="a" style="left:1872px;top:507px" width="40" height="40" viewBox="0 0 40 40"><path d="M21.5 7.8 L9 20.5 Q7.5 22.5 9 24.5 L15 32" fill="none" stroke="#5ab4ea" stroke-width="2.7" stroke-linecap="round" stroke-linejoin="round"/><path d="M19.8 13.5 Q20.5 13 21.2 13.7 L24 17.7" fill="none" stroke="#f5b431" stroke-width="2.7" stroke-linecap="round"/><path d="M15.5 33.5 Q18 35 20.5 33 L24 29" fill="none" stroke="#f5b431" stroke-width="2.7" stroke-linecap="round"/><path d="M24.2 23.8 H33" stroke="#ababab" stroke-width="2.8" stroke-linecap="round"/><circle cx="19.8" cy="19.2" r="1.5" fill="#4d94ef"/><path d="M14.2 21.6 L16.5 20.8 L19.2 21.8 L21.5 22.5 L22.8 21.4 M18.8 21.4 L17.5 25 L13.7 26.2 M17.6 25 L19.6 26.5 L18.5 29.5" fill="none" stroke="#4d94ef" stroke-width="1.5" stroke-linecap="round" stroke-linejoin="round"/></svg>

<svg class="a" style="left:1872px;top:570px" width="40" height="40" viewBox="0 0 40 40"><path d="M19 6.5 Q20.5 17 31 19 Q20.5 21 19 32 Q17.5 21 6.5 19 Q17.5 17 19 6.5 Z" fill="none" stroke="#6c707e" stroke-width="2" stroke-linejoin="round"/><circle cx="29.5" cy="8.5" r="3.5" fill="#6c707e"/></svg>
<div class="a" style="left:21px;top:1051px;width:12px;height:12px;border:1.6px solid #3574f0;border-radius:3px;background:#e6eefc"></div>
<div class="a" style="left:40px;top:1046px;font-size:19.5px;color:#6c707e;white-space:nowrap;letter-spacing:0.6px">E:</div>
<svg class="i" style="left:68.0px;top:1050.0px;stroke:#8a8e99;stroke-width:2" width="14" height="14" viewBox="0 0 24 24"><path d="M8 4 L16 12 L8 20"/></svg>
<svg class="i" style="left:199.0px;top:1050.0px;stroke:#8a8e99;stroke-width:2" width="14" height="14" viewBox="0 0 24 24"><path d="M8 4 L16 12 L8 20"/></svg>
<svg class="i" style="left:295.0px;top:1050.0px;stroke:#8a8e99;stroke-width:2" width="14" height="14" viewBox="0 0 24 24"><path d="M8 4 L16 12 L8 20"/></svg>
<svg class="i" style="left:434.0px;top:1050.0px;stroke:#8a8e99;stroke-width:2" width="14" height="14" viewBox="0 0 24 24"><path d="M8 4 L16 12 L8 20"/></svg>
<div class="a" style="left:93px;top:1046px;font-size:19.5px;color:#6c707e;white-space:nowrap;letter-spacing:0.6px;letter-spacing:0.33px">java_code</div>
<div class="a" style="left:222px;top:1046px;font-size:19.5px;color:#6c707e;white-space:nowrap;letter-spacing:0.6px;letter-spacing:0.86px">lc-test</div>
<svg class="a" style="left:320px;top:1046px" width="24" height="24" viewBox="0 0 24 24"><circle cx="12" cy="12" r="10" fill="none" stroke="#3574f0" stroke-width="1.6"/><path d="M15.5 8.5 Q14 7 12 7 Q7.5 7 7.5 12 Q7.5 17 12 17 Q14 17 15.5 15.5" fill="none" stroke="#3574f0" stroke-width="1.6"/></svg>
<div class="a" style="left:350px;top:1046px;font-size:19.5px;color:#6c707e;white-space:nowrap;letter-spacing:0.6px;letter-spacing:0.44px">Solution</div>
<svg class="a" style="left:461px;top:1046px" width="24" height="24" viewBox="0 0 24 24"><circle cx="12" cy="12" r="10" fill="none" stroke="#e5424f" stroke-width="1.6"/><path d="M7 16 V10 M7 11.5 Q7 9.5 9.5 9.5 Q12 9.5 12 11.5 V16 M12 11.5 Q12 9.5 14.5 9.5 Q17 9.5 17 11.5 V16" fill="none" stroke="#e5424f" stroke-width="1.6"/></svg>
<div class="a" style="left:490px;top:1046px;font-size:19.5px;color:#6c707e;white-space:nowrap;letter-spacing:0.6px;letter-spacing:0.58px">twoSum</div>
<svg class="a" style="left:1382px;top:1047px" width="24" height="20" viewBox="0 0 24 20"><defs><linearGradient id="vg" x1="0" y1="0" x2="1" y2="1"><stop offset="0" stop-color="#21d789"/><stop offset="1" stop-color="#087cfa"/></linearGradient></defs><path d="M1 1 H7 L10 13 L17 1 H23 L12 19 H6 Z" fill="url(#vg)"/></svg>
<svg class="a" style="left:1427px;top:1040px" width="30.0" height="30.0" viewBox="0 0 40 40"><rect x="5" y="21" width="6.3" height="6" rx="0.6" fill="#1f62ff"/><path d="M12.5 10 H34.8 V16 H19 V21 H12.5 Z" fill="#1a9bff"/><path d="M19 21 H34.8 V27 H25 V32 H19 Z" fill="#4cb6ff"/></svg>
<div class="a" style="left:1478px;top:1046px;font-size:19.5px;color:#6c707e;white-space:nowrap;letter-spacing:0.6px;letter-spacing:0">28:1</div>
<div class="a" style="left:1539px;top:1046px;font-size:19.5px;color:#6c707e;white-space:nowrap;letter-spacing:0.6px">LF</div>
<div class="a" style="left:1587px;top:1046px;font-size:19.5px;color:#6c707e;white-space:nowrap;letter-spacing:0.6px;letter-spacing:0.56px">UTF-8</div>
<svg class="a" style="left:1665px;top:1042px" width="30.0" height="30.0" viewBox="0 0 40 40"><g fill="#6a4cf0"><polygon points="15.9,5.2 20.2,5.2 22.4,8.7 30.6,8.7 32.6,12.8 16.1,12.8 18,9.4"/><polygon points="5,16.5 7.4,12.4 15.6,26.7 11.5,26.7 9.4,31.1 7,27.2 8.9,23.5"/><polygon points="14.1,16.3 25.6,16.3 19.8,25.9"/><polygon points="28.5,20.2 30.7,23.7 34.8,23.7 32.4,27.8 28.1,27.8 24.1,34.8 19.4,34.8"/></g><g fill="none" stroke="#6a4cf0" stroke-width="0.9" stroke-linejoin="round"><polygon points="15.9,5.2 20.2,5.2 22.4,8.7 30.6,8.7 32.6,12.8 30.7,16.3 34.8,23.7 32.4,27.8 28.1,27.8 24.1,34.8 19.4,34.8 17.4,31.3 9.4,31.1 7,27.2 8.9,23.5 5,16.5 7.4,12.4 11.8,12.4"/></g></svg>
<div class="a" style="left:1716px;top:1046px;font-size:19.5px;color:#6c707e;white-space:nowrap;letter-spacing:0.6px;letter-spacing:0.75px">4 spaces</div>
<svg class="i" style="left:1826.0px;top:1045.0px;" width="24" height="24" viewBox="0 0 24 24"><rect x="3" y="11" width="13" height="10" rx="2"/><path d="M12 11 V7 Q12 3 16.5 3 Q21 3 21 7 V9"/></svg>
<svg class="i" style="left:1871.0px;top:1045.0px;" width="24" height="24" viewBox="0 0 24 24"><circle cx="12" cy="12" r="10"/><path d="M12 6.5 V13"/><circle cx="12" cy="17" r="0.6" fill="#6c707e"/></svg>
<div class="a" style="left:1381px;top:214px;width:14px;height:749px;background:rgba(0,0,0,0.135);border:1px solid rgba(0,0,0,0.05)"></div>
<!-- STATUS BAR -->
<div class="a" style="left:0;top:1035px;width:1920px;height:1px;background:#ebecf0"></div>
</body></html>
